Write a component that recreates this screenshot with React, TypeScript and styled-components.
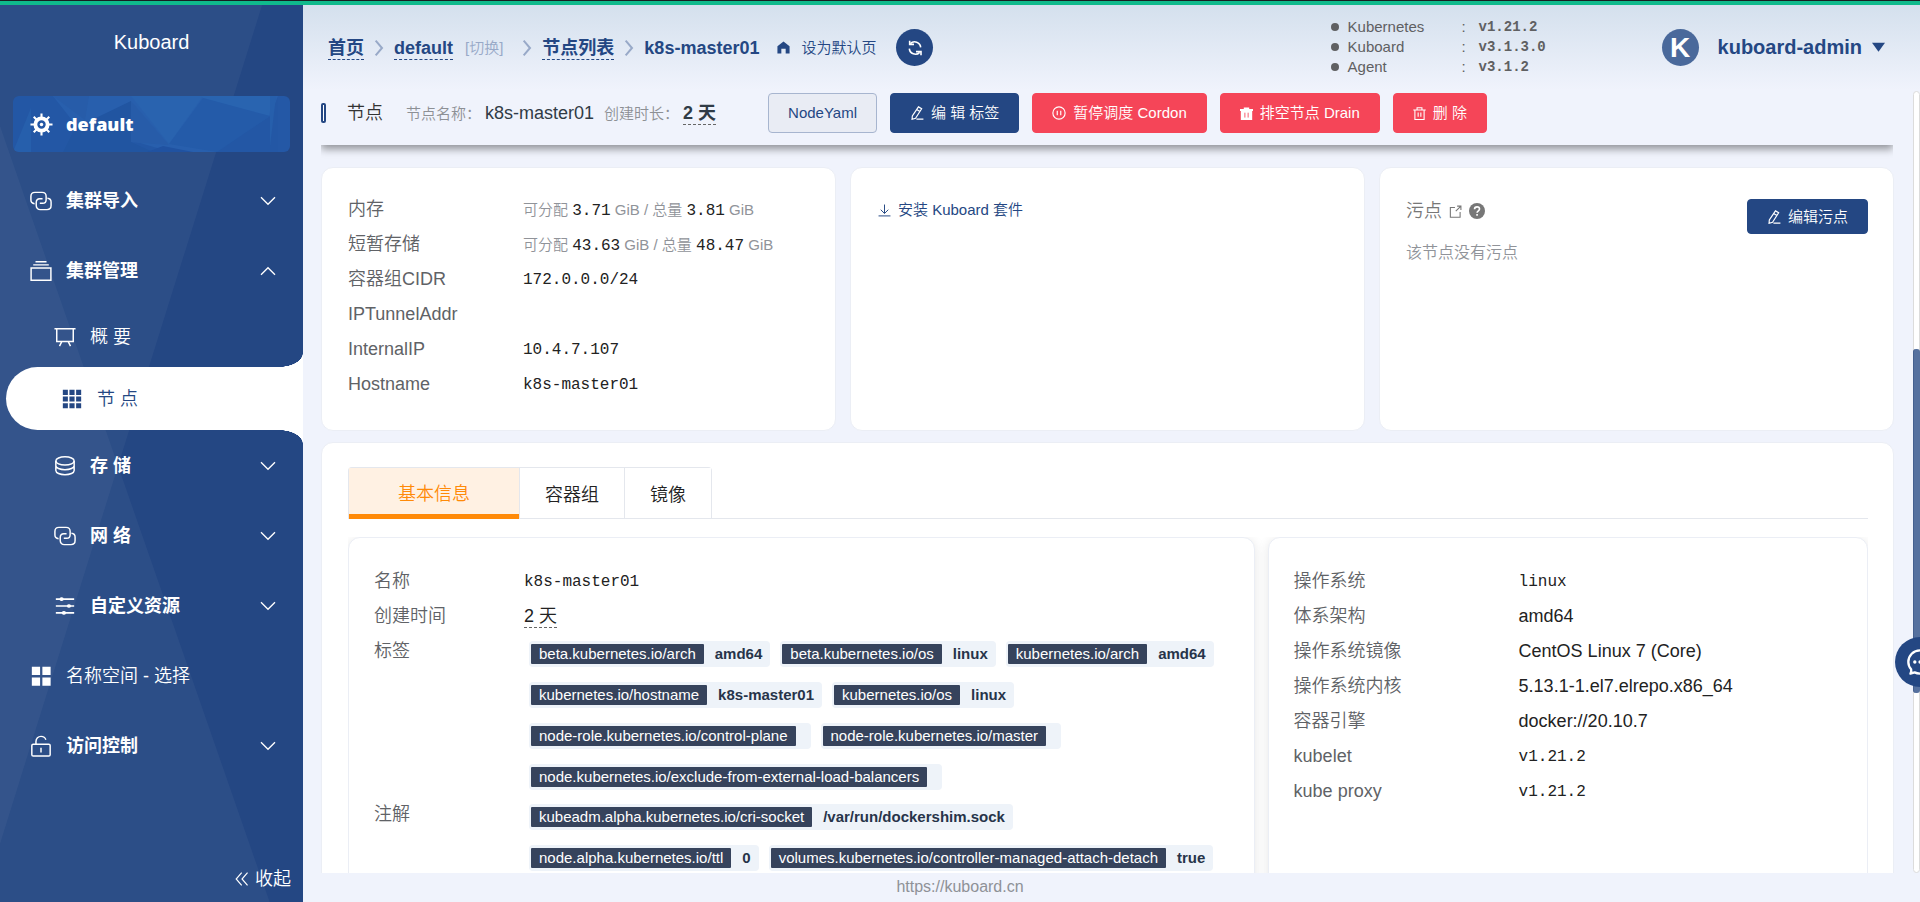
import React from 'react';
import styled, { createGlobalStyle, css } from 'styled-components';

const navy = '#244783';
const pageBg = '#f0f3fc';
const mono = '"Liberation Mono", "Noto Sans CJK SC", monospace';

const GlobalStyle = createGlobalStyle`
  *, *::before, *::after { box-sizing: border-box; }
  body {
    margin: 0;
    background: ${pageBg};
    color: #222;
    font: 350 18px/24px "Liberation Sans", "Noto Sans CJK SC", sans-serif;
  }
  a { color: inherit; text-decoration: none; }
  button { font: inherit; cursor: pointer; }
  ul, dl, dd { margin: 0; padding: 0; list-style: none; }
`;

/* ---------- icons ---------- */

const IconSvg = styled.svg<{ $size: number }>`
  flex: none;
  display: block;
  width: ${p => p.$size}px;
  height: ${p => p.$size}px;
  fill: none;
  stroke: currentColor;
  stroke-width: 1.6;
`;

type IconName =
  | 'gear' | 'link' | 'files' | 'board' | 'grid9' | 'coin' | 'sliders' | 'grid4' | 'unlock'
  | 'down' | 'up' | 'right' | 'collapse' | 'home' | 'refresh' | 'edit' | 'pause'
  | 'trashFull' | 'trash' | 'download' | 'external' | 'help' | 'chat' | 'caret';

const shapes: Record<IconName, React.ReactNode> = {
  gear: (
    <>
      <circle cx="12" cy="12" r="6.4" strokeWidth="4" />
      <circle cx="12" cy="12" r="1.8" fill="currentColor" stroke="none" />
      <path strokeWidth="2.2" d="M12 .5v4M12 19.500v4M.5 12h4M19.500 12h4M3.900 3.900l2.800 2.800M17.300 17.300l2.800 2.800M3.900 20.100l2.800-2.800M17.300 6.700l2.800-2.800" />
    </>
  ),
  link: (
    <>
      <path d="M5 14.900C2.600 14.700 1 13.200 1 11V7c0-2.600 1.800-4.400 4.400-4.400h7.800c2.600 0 4.400 1.800 4.400 4.400v3.500c0 2.300-1.500 3.900-3.900 4h-3" />
      <path d="M19 8.900c2.400.2 4 1.900 4 4.100v4c0 2.600-1.800 4.400-4.400 4.400h-7.400c-2.600 0-4.400-1.800-4.400-4.400v-3.500c0-2.300 1.500-3.900 3.900-4h3" />
    </>
  ),
  files: <path d="M1.200 8.800h21.600V22H1.200zM3.500 5.300h17M6 2h12" />,
  board: <path d="M.5 3h23M3 3v14h18V3M8.500 17L6 22M15.500 17l2.500 5" />,
  grid9: (
    <path stroke="none" fill="currentColor" d="M2 2h5.500v5.500H2zM9.200 2h5.600v5.500H9.200zM16.500 2H22v5.500h-5.500zM2 9.200h5.500v5.600H2zM9.200 9.200h5.600v5.600H9.200zM16.500 9.200H22v5.600h-5.500zM2 16.500h5.500V22H2zM9.200 16.500h5.600V22H9.200zM16.500 16.500H22V22h-5.500z" />
  ),
  coin: (
    <>
      <ellipse cx="12" cy="6.500" rx="10" ry="4.500" />
      <path d="M2 6.500v5.200c0 2.400 4.500 4.300 10 4.300s10-1.900 10-4.300V6.500M2 11.700V17c0 2.600 4.500 4.500 10 4.500S22 19.600 22 17v-5.300" />
    </>
  ),
  sliders: (
    <>
      <path strokeWidth="1.800" d="M2 4.500h20M2 12h20M2 19.500h20" />
      <path strokeWidth="4" strokeLinecap="round" d="M8 4.500h.6M16 12h.6M10.500 19.500h.6" />
    </>
  ),
  grid4: <path stroke="none" fill="currentColor" d="M2 2h9v9H2zM13.500 2h9v9h-9zM2 13.500h9v9H2zM13.500 13.500h9v9h-9z" />,
  unlock: (
    <>
      <rect x="2" y="10" width="20" height="13" rx="1.500" />
      <path d="M6.500 10V7.200C6.500 3.700 9 1.500 12 1.500c2.600 0 4.600 1.400 5.300 3.600M12 13.800v5.200" />
    </>
  ),
  down: <path strokeWidth="2" d="M1.500 6.500L12 17 22.500 6.500" />,
  up: <path strokeWidth="2" d="M1.500 17.500L12 7l10.500 10.500" />,
  right: <path strokeWidth="3" d="M7 1l9.500 11L7 23" />,
  collapse: <path strokeWidth="2" d="M11.500 1L2 12l9.500 11M21.500 1L12 12l9.500 11" />,
  home: <path stroke="none" fill="currentColor" d="M12 1L.8 9.500V23H8v-8.500h8V23h7.200V9.500z" />,
  refresh: (
    <>
      <path strokeWidth="2.400" d="M20.500 11A9 9 0 0 0 5 5.500M3.500 13A9 9 0 0 0 19 18.500" />
      <path strokeWidth="2.400" d="M10.500 6.500H4V1M13.500 17.500H21V23" />
    </>
  ),
  edit: <path strokeWidth="2" d="M11 22.500h12M14.500 1.500L20 4.800 9.500 21l-6 1.800L4 17zM11.500 6l5.500 3.500" />,
  pause: (
    <>
      <circle cx="12" cy="12" r="10.500" strokeWidth="2" />
      <path strokeWidth="2" d="M9 8v8M15 8v8" />
    </>
  ),
  trashFull: (
    <>
      <path stroke="none" fill="currentColor" d="M0 3.500h7V1h10v2.500h7v4h-1.500V24h-21V7.500H0z" />
      <path stroke="#f54558" strokeWidth="1.600" d="M9 10.500v9M15 10.500v9" />
    </>
  ),
  trash: <path strokeWidth="2" d="M.5 5.500h23M3.500 5.500V23h17V5.500M7.500 5V1.500h9V5M9.500 10v8M14.500 10v8" />,
  download: <path strokeWidth="1.800" d="M1 22h22M12 1v16M5 10.500l7 7 7-7" />,
  external: <path strokeWidth="2" d="M11 4.500H2.500v18h18V13M15 2h7v7M22 2l-9.500 9.500" />,
  help: (
    <>
      <circle cx="12" cy="12" r="12" stroke="none" fill="currentColor" />
      <path stroke="#fff" strokeWidth="2.400" d="M8.300 9.500c0-2.300 1.600-3.700 3.800-3.700s3.700 1.400 3.700 3.300c0 2.600-3.700 2.700-3.700 5.600M12.100 16.500V19" />
    </>
  ),
  chat: (
    <>
      <path strokeWidth="2" strokeLinejoin="round" d="M3.800 22c.7-1.400.9-2.600.6-3.800C2.800 16.500 2 14.400 2 12 2 6.400 6.400 2 12 2s10 4.400 10 10-4.400 10-10 10c-1.700 0-3.200-.3-4.600-1.100z" />
      <path strokeWidth="2.800" strokeLinecap="round" d="M7.500 12h.1M12 12h.1M16.500 12h.1" />
    </>
  ),
  caret: <path stroke="none" fill="currentColor" d="M0 3h24L12 20z" />,
};

const Icon = ({ name, size }: { name: IconName; size: number }) => (
  <IconSvg viewBox="0 0 24 24" $size={size} aria-hidden="true">{shapes[name]}</IconSvg>
);

/* ---------- shell ---------- */

const Shell = styled.div`
  display: flex;
  flex-direction: column;
  height: 100vh;
  overflow: hidden;
`;

const ProgressBar = styled.div`
  flex: none;
  height: 5px;
  border-top: 1px solid #1a1f22;
  background: #10ba8c;
`;

const Columns = styled.div`
  flex: 1;
  min-height: 0;
  display: flex;
`;

/* ---------- sidebar ---------- */

const Sidebar = styled.aside`
  position: relative;
  z-index: 1;
  flex: none;
  width: 303px;
  display: flex;
  flex-direction: column;
  background: ${navy};
  color: #fff;

  &::before, &::after {
    content: '';
    position: absolute;
    inset: 0;
    z-index: -1;
    background: rgba(255, 255, 255, 0.04);
  }
  &::before { clip-path: polygon(0 0, 86.5% 0, 0 93.5%); }
  &::after { clip-path: polygon(0 13.5%, 89% 100%, 0 100%); }
`;

const Brand = styled.div`
  height: 91px;
  padding-top: 25px;
  text-align: center;
  font-size: 20px;
`;

const ClusterCard = styled.a`
  position: relative;
  z-index: 0;
  display: flex;
  align-items: center;
  gap: 13px;
  height: 56px;
  margin: 0 13px 14px;
  padding-left: 17px;
  border-radius: 6px;
  overflow: hidden;
  background: #2458a6;
  font: 800 18px/24px "Open Sans", sans-serif;
`;

const Facets = styled.svg`
  position: absolute;
  inset: 0;
  z-index: -1;
  width: 100%;
  height: 100%;
  opacity: 0.7;
`;

const NavLink = styled.a<{ $level?: number; $bold?: boolean }>`
  display: flex;
  align-items: center;
  gap: 14px;
  height: ${p => (p.$level === 2 && !p.$bold ? 61 : 70)}px;
  padding: 0 27px 0 ${p => (p.$level === 2 ? 54 : 30)}px;
  font-weight: ${p => (p.$bold ? 700 : 350)};
`;

const ActiveLink = styled(NavLink)`
  position: relative;
  height: 63px;
  margin-left: 6px;
  margin-bottom: 1px;
  padding-left: 55px;
  border-radius: 32px 0 0 32px;
  background: #fff;
  color: ${navy};

  &::before, &::after {
    content: '';
    position: absolute;
    right: 0;
    width: 24px;
    height: 14px;
  }
  &::before {
    bottom: 100%;
    background: radial-gradient(24px 14px at 0 0, transparent 98%, #fff);
  }
  &::after {
    top: 100%;
    background: radial-gradient(24px 14px at 0 100%, transparent 98%, #fff);
  }
`;

const NavLabel = styled.span`
  flex: 1;
`;

const CollapseButton = styled.button`
  display: flex;
  align-items: center;
  gap: 6px;
  margin: auto 12px 11px auto;
  padding: 0;
  border: 0;
  background: none;
  color: #fff;
`;

type NavEntry = { icon: IconName; label: string; level?: number; bold?: boolean; arrow?: 'up' | 'down'; active?: boolean };

const navEntries: NavEntry[] = [
  { icon: 'link', label: '集群导入', bold: true, arrow: 'down' },
  { icon: 'files', label: '集群管理', bold: true, arrow: 'up' },
  { icon: 'board', label: '概 要', level: 2 },
  { icon: 'grid9', label: '节 点', level: 2, active: true },
  { icon: 'coin', label: '存 储', level: 2, bold: true, arrow: 'down' },
  { icon: 'link', label: '网 络', level: 2, bold: true, arrow: 'down' },
  { icon: 'sliders', label: '自定义资源', level: 2, bold: true, arrow: 'down' },
  { icon: 'grid4', label: '名称空间 - 选择' },
  { icon: 'unlock', label: '访问控制', bold: true, arrow: 'down' },
];

/* ---------- header ---------- */

const Main = styled.div`
  position: relative;
  flex: 1;
  min-width: 0;
  display: flex;
  flex-direction: column;
  background: linear-gradient(#d4e0ed, ${pageBg} 85px);
`;

const Header = styled.header`
  flex: none;
  display: flex;
  align-items: center;
  height: 85px;
  padding: 0 35px 0 25px;
  color: ${navy};
`;

const Breadcrumb = styled.nav`
  flex: 1;
  display: flex;
  align-items: center;
  font-weight: 700;
`;

const Crumb = styled.a`
  height: 24px;
  border-bottom: 1px dashed ${navy};
  line-height: 24px;
`;

const CrumbArrow = styled.span`
  margin: 0 7px;
  color: #98a9c8;
`;

const SwitchLink = styled.a`
  margin: 0 9px 0 12px;
  color: #98a9c8;
  font-size: 15px;
  font-weight: 350;
`;

const HomeLink = styled.a`
  display: flex;
  align-items: center;
  gap: 11px;
  margin: 0 20px 0 18px;
  font-size: 15px;
  font-weight: 350;
`;

const RefreshButton = styled.button`
  display: grid;
  place-items: center;
  width: 37px;
  height: 37px;
  padding: 0;
  border: 0;
  border-radius: 50%;
  background: ${navy};
  color: #fff;
`;

const Versions = styled.ul`
  width: 331px;
  padding-bottom: 2px;
  color: #5f6062;
  font-size: 15px;
  line-height: 20px;
`;

const Version = styled.li`
  display: grid;
  grid-template-columns: 17px 114px 17px 1fr;
  align-items: center;

  &::before {
    content: '';
    width: 8px;
    height: 8px;
    border-radius: 50%;
    background: currentColor;
  }
  b { font: 700 14px/20px ${mono}; }
`;

const UserButton = styled.button`
  display: flex;
  align-items: center;
  padding: 0;
  border: 0;
  background: none;
  color: ${navy};
  font-size: 20px;
  font-weight: 700;
`;

const Avatar = styled.span`
  display: grid;
  place-items: center;
  width: 37px;
  height: 37px;
  margin-right: 19px;
  border-radius: 50%;
  background: #4a699b;
  color: #fff;
  font-size: 28px;
`;

const UserName = styled.span`
  margin-right: 10px;
  padding-bottom: 2px;
`;

/* ---------- toolbar ---------- */

const Toolbar = styled.div`
  position: relative;
  z-index: 1;
  flex: none;
  display: flex;
  align-items: center;
  margin: 0 27px 0 18px;
  padding: 3px 0 12px;
  background: ${pageBg};
  box-shadow: 0 4px 8px rgba(0, 0, 0, 0.4);
  clip-path: inset(0 0 -14px 0);
`;

const Marker = styled.span`
  width: 5px;
  height: 20px;
  margin-right: 21px;
  border: 2px solid ${navy};
  border-radius: 2px;
  background: #fff;
`;

const PageTitle = styled.h1`
  margin: 0 23px 0 0;
  color: #333;
  font-size: 18px;
  font-weight: 350;
`;

const Fact = styled.span`
  margin-right: 10px;
  color: #8d9095;
  font-size: 15px;
`;

const FactValue = styled.span`
  margin-left: 4px;
  color: #303b46;
  font-size: 18px;
`;

const Dashed = styled.span<{ $bold?: boolean }>`
  padding-bottom: 1px;
  border-bottom: 1px dashed #666;
  font-weight: ${p => (p.$bold ? 700 : 350)};
`;

const Actions = styled.div`
  display: flex;
  gap: 13px;
  margin-left: 42px;
`;

const Button = styled.button<{ $kind: 'plain' | 'primary' | 'danger'; $small?: boolean }>`
  display: flex;
  align-items: center;
  gap: 7px;
  height: ${p => (p.$small ? 35 : 40)}px;
  padding: 0 19px;
  border: 1px solid;
  border-radius: 4px;
  font-size: 15px;
  white-space: nowrap;
  ${p => p.$kind === 'plain' && css`background: #e9ecf4; border-color: #a7b5cf; color: ${navy};`}
  ${p => p.$kind === 'primary' && css`background: ${navy}; border-color: ${navy}; color: #fff;`}
  ${p => p.$kind === 'danger' && css`background: #f54558; border-color: #f54558; color: #fff;`}
`;

/* ---------- content ---------- */

const Scroller = styled.main`
  flex: 1;
  min-height: 0;
  overflow-y: auto;
  scrollbar-width: none;
  padding: 22px 26px 0 18px;
`;

const CardRow = styled.div`
  display: grid;
  grid-template-columns: repeat(3, 1fr);
  gap: 14px;
  margin-bottom: 11px;
`;

const Card = styled.section`
  padding: 24px 25px 28px 26px;
  border: 1px solid #ebeef5;
  border-radius: 12px;
  background: #fff;
`;

const Facts = styled.dl<{ $labelWidth: number }>`
  display: grid;
  grid-template-columns: ${p => p.$labelWidth}px 1fr;
  color: #222;
  line-height: 35px;
`;

const Label = styled.dt`
  color: #606266;
`;

const Value = styled.dd<{ $mono?: boolean }>`
  min-width: 0;
  ${p => p.$mono && css`
    height: 35px;
    font: 16px/37px ${mono};
  `}
`;

const Capacity = styled(Value)`
  color: #909399;
  font-size: 15px;
`;

const Amount = styled.span`
  color: #222;
  font: 16px ${mono};
`;

const InstallLink = styled.a`
  display: flex;
  align-items: center;
  gap: 7px;
  padding: 6px 1px;
  color: ${navy};
  font-size: 15px;
`;

const TaintHeader = styled.div`
  display: flex;
  justify-content: space-between;
  padding-top: 7px;
  color: #777;
`;

const TaintTitle = styled.div`
  display: flex;
  align-items: center;
  height: 24px;
  gap: 7px;
`;

const Note = styled.p`
  margin: 7px 0 0;
  color: #909399;
  font-size: 16px;
`;

const Tabs = styled.div`
  display: flex;
  border-bottom: 1px solid #e4e7ed;
`;

const TabGroup = styled.div`
  display: flex;
  margin-bottom: -1px;
  border: 1px solid #e4e7ed;
  border-bottom: 0;
  border-radius: 4px 4px 0 0;
`;

const Tab = styled.button<{ $active?: boolean }>`
  height: 51px;
  padding: 3px 25px 0;
  border: 0;
  border-bottom: 1px solid #e4e7ed;
  background: #fff;
  color: #222;

  & + & { border-left: 1px solid #e4e7ed; }

  ${p => p.$active && css`
    padding: 5px 49px 0;
    border-bottom: 5px solid #ff8a08;
    background: #fff1e3;
    color: #ff8a08;
  `}
`;

const Panels = styled.div`
  display: grid;
  grid-template-columns: 151fr 100fr;
  gap: 13px;
  margin-top: 18px;
  overflow: hidden;
`;

const Panel = styled(Card)`
  padding: 26px 25px;
  box-shadow: 0 2px 12px rgba(0, 0, 0, 0.1);
`;

const TagList = styled.ul`
  display: flex;
  flex-wrap: wrap;
  gap: 15px 10px;
  padding: 7px 0 7px 5px;
  font-size: 15px;
  line-height: 20px;
`;

const Tag = styled.li`
  display: flex;
  padding: 3px 2px;
  border-radius: 4px;
  background: #eef3f9;
`;

const TagKey = styled.span`
  padding: 0 8px;
  border-radius: 1px;
  background: #36435c;
  color: #fff;
`;

const TagValue = styled.b<{ $empty: boolean }>`
  padding: 0 6px 0 ${p => (p.$empty ? 7 : 11)}px;
  color: #27344a;
  font-weight: 700;
`;

const Footer = styled.footer`
  flex: none;
  height: 29px;
  margin-left: -303px;
  background: ${pageBg};
  color: #8e9197;
  font-size: 16px;
  line-height: 28px;
  text-align: center;
`;

const ScrollTrack = styled.div`
  position: absolute;
  top: 86px;
  right: 0;
  bottom: 29px;
  width: 7px;
  border: 1px solid #dcdcdc;
  border-radius: 4px;
  background: #fff;
`;

const ScrollThumb = styled.div`
  position: absolute;
  top: 33%;
  left: -1px;
  width: 7px;
  height: 44%;
  border-radius: 3px;
  background: #56719f;
  border-left: 1px solid #45608f;
`;

const ChatButton = styled.button`
  position: fixed;
  right: -25px;
  top: 637px;
  z-index: 2;
  display: grid;
  place-items: center;
  width: 50px;
  height: 50px;
  padding: 0;
  border: 0;
  border-radius: 50%;
  background: ${navy};
  color: #fff;
`;

const labels: [string, string][] = [
  ['beta.kubernetes.io/arch', 'amd64'],
  ['beta.kubernetes.io/os', 'linux'],
  ['kubernetes.io/arch', 'amd64'],
  ['kubernetes.io/hostname', 'k8s-master01'],
  ['kubernetes.io/os', 'linux'],
  ['node-role.kubernetes.io/control-plane', ''],
  ['node-role.kubernetes.io/master', ''],
  ['node.kubernetes.io/exclude-from-external-load-balancers', ''],
];

const annotations: [string, string][] = [
  ['kubeadm.alpha.kubernetes.io/cri-socket', '/var/run/dockershim.sock'],
  ['node.alpha.kubernetes.io/ttl', '0'],
  ['volumes.kubernetes.io/controller-managed-attach-detach', 'true'],
];

const capacities = [
  { label: '内存', free: '3.71', total: '3.81' },
  { label: '短暂存储', free: '43.63', total: '48.47' },
];

const addresses: [string, string][] = [
  ['容器组CIDR', '172.0.0.0/24'],
  ['IPTunnelAddr', ''],
  ['InternalIP', '10.4.7.107'],
  ['Hostname', 'k8s-master01'],
];

const system: [string, string, boolean][] = [
  ['操作系统', 'linux', true],
  ['体系架构', 'amd64', false],
  ['操作系统镜像', 'CentOS Linux 7 (Core)', false],
  ['操作系统内核', '5.13.1-1.el7.elrepo.x86_64', false],
  ['容器引擎', 'docker://20.10.7', false],
  ['kubelet', 'v1.21.2', true],
  ['kube proxy', 'v1.21.2', true],
];

const Tags = ({ items }: { items: [string, string][] }) => (
  <TagList>
    {items.map(([key, value]) => (
      <Tag key={key}>
        <TagKey>{key}</TagKey>
        <TagValue $empty={!value}>{value}</TagValue>
      </Tag>
    ))}
  </TagList>
);

const NavItem = ({ entry }: { entry: NavEntry }) => {
  const Link = entry.active ? ActiveLink : NavLink;
  return (
    <Link href="#" $level={entry.level} $bold={entry.bold} aria-current={entry.active ? 'page' : undefined}>
      <Icon name={entry.icon} size={22} />
      <NavLabel>{entry.label}</NavLabel>
      {entry.arrow && <Icon name={entry.arrow} size={16} />}
    </Link>
  );
};

export default function App() {
  return (
    <Shell>
      <GlobalStyle />
      <ProgressBar />
      <Columns>
        <Sidebar>
          <Brand>Kuboard</Brand>
          <ClusterCard href="#">
            <Facets viewBox="0 0 277 56" preserveAspectRatio="none" aria-hidden="true">
              <path fill="#2b63b1" d="M40 0h225l-8 20-55 36H158L62 28z" />
              <path fill="#2a5fab" d="M40 0h36l-4 24zM118 5l38 44-84-6z" />
              <path fill="#2d68b4" d="M118 0h72l-34 48z" />
              <path fill="#2d6ab6" d="M190 2l66 18 4-20h-72z" />
              <path fill="#255dac" d="M190 2l-34 46 48 8 53-36z" />
              <path fill="#2154a0" d="M118 5L62 32l-12 24h90l-22-10z" />
              <path fill="#2050a0" d="M150 50l30 6h-46z" />
              <path fill="#2963af" d="M257 0h6l-6 50zM0 56L18 12v44z" />
            </Facets>
            <Icon name="gear" size={23} />
            default
          </ClusterCard>
          <nav>
            {navEntries.map(entry => <NavItem key={entry.label} entry={entry} />)}
          </nav>
          <CollapseButton>
            <Icon name="collapse" size={14} />
            收起
          </CollapseButton>
        </Sidebar>

        <Main>
          <Header>
            <Breadcrumb>
              <Crumb href="#">首页</Crumb>
              <CrumbArrow><Icon name="right" size={16} /></CrumbArrow>
              <Crumb href="#">default</Crumb>
              <SwitchLink href="#">[切换]</SwitchLink>
              <CrumbArrow><Icon name="right" size={16} /></CrumbArrow>
              <Crumb href="#">节点列表</Crumb>
              <CrumbArrow><Icon name="right" size={16} /></CrumbArrow>
              k8s-master01
              <HomeLink href="#"><Icon name="home" size={13} />设为默认页</HomeLink>
              <RefreshButton aria-label="刷新"><Icon name="refresh" size={16} /></RefreshButton>
            </Breadcrumb>
            <Versions>
              <Version>Kubernetes<span>:</span><b>v1.21.2</b></Version>
              <Version>Kuboard<span>:</span><b>v3.1.3.0</b></Version>
              <Version>Agent<span>:</span><b>v3.1.2</b></Version>
            </Versions>
            <UserButton>
              <Avatar>K</Avatar>
              <UserName>kuboard-admin</UserName>
              <Icon name="caret" size={13} />
            </UserButton>
          </Header>

          <Toolbar>
            <Marker />
            <PageTitle>节点</PageTitle>
            <Fact>节点名称：<FactValue>k8s-master01</FactValue></Fact>
            <Fact>创建时长：<FactValue><Dashed $bold>2 天</Dashed></FactValue></Fact>
            <Actions>
              <Button $kind="plain">NodeYaml</Button>
              <Button $kind="primary"><Icon name="edit" size={14} />编 辑 标签</Button>
              <Button $kind="danger"><Icon name="pause" size={14} />暂停调度 Cordon</Button>
              <Button $kind="danger"><Icon name="trashFull" size={13} />排空节点 Drain</Button>
              <Button $kind="danger"><Icon name="trash" size={13} />删 除</Button>
            </Actions>
          </Toolbar>

          <Scroller>
            <CardRow>
              <Card>
                <Facts $labelWidth={175}>
                  {capacities.map(row => (
                    <React.Fragment key={row.label}>
                      <Label>{row.label}</Label>
                      <Capacity>
                        可分配 <Amount>{row.free}</Amount> GiB / 总量 <Amount>{row.total}</Amount> GiB
                      </Capacity>
                    </React.Fragment>
                  ))}
                  {addresses.map(([label, value]) => (
                    <React.Fragment key={label}>
                      <Label>{label}</Label>
                      <Value $mono>{value}</Value>
                    </React.Fragment>
                  ))}
                </Facts>
              </Card>
              <Card>
                <InstallLink href="#"><Icon name="download" size={13} />安装 Kuboard 套件</InstallLink>
              </Card>
              <Card>
                <TaintHeader>
                  <TaintTitle>
                    污点
                    <Icon name="external" size={13} />
                    <Icon name="help" size={16} />
                  </TaintTitle>
                  <Button $kind="primary" $small><Icon name="edit" size={14} />编辑污点</Button>
                </TaintHeader>
                <Note>该节点没有污点</Note>
              </Card>
            </CardRow>

            <Card>
              <Tabs>
                <TabGroup role="tablist">
                  <Tab role="tab" aria-selected $active>基本信息</Tab>
                  <Tab role="tab">容器组</Tab>
                  <Tab role="tab">镜像</Tab>
                </TabGroup>
              </Tabs>
              <Panels>
                <Panel>
                  <Facts $labelWidth={150}>
                    <Label>名称</Label>
                    <Value $mono>k8s-master01</Value>
                    <Label>创建时间</Label>
                    <Value><Dashed>2 天</Dashed></Value>
                    <Label>标签</Label>
                    <Value><Tags items={labels} /></Value>
                    <Label>注解</Label>
                    <Value><Tags items={annotations} /></Value>
                  </Facts>
                </Panel>
                <Panel>
                  <Facts $labelWidth={225}>
                    {system.map(([label, value, isMono]) => (
                      <React.Fragment key={label}>
                        <Label>{label}</Label>
                        <Value $mono={isMono}>{value}</Value>
                      </React.Fragment>
                    ))}
                  </Facts>
                </Panel>
              </Panels>
            </Card>
          </Scroller>
          <Footer>https://kuboard.cn</Footer>
          <ScrollTrack><ScrollThumb /></ScrollTrack>
        </Main>
      </Columns>
      <ChatButton aria-label="聊天"><Icon name="chat" size={28} /></ChatButton>
    </Shell>
  );
}
